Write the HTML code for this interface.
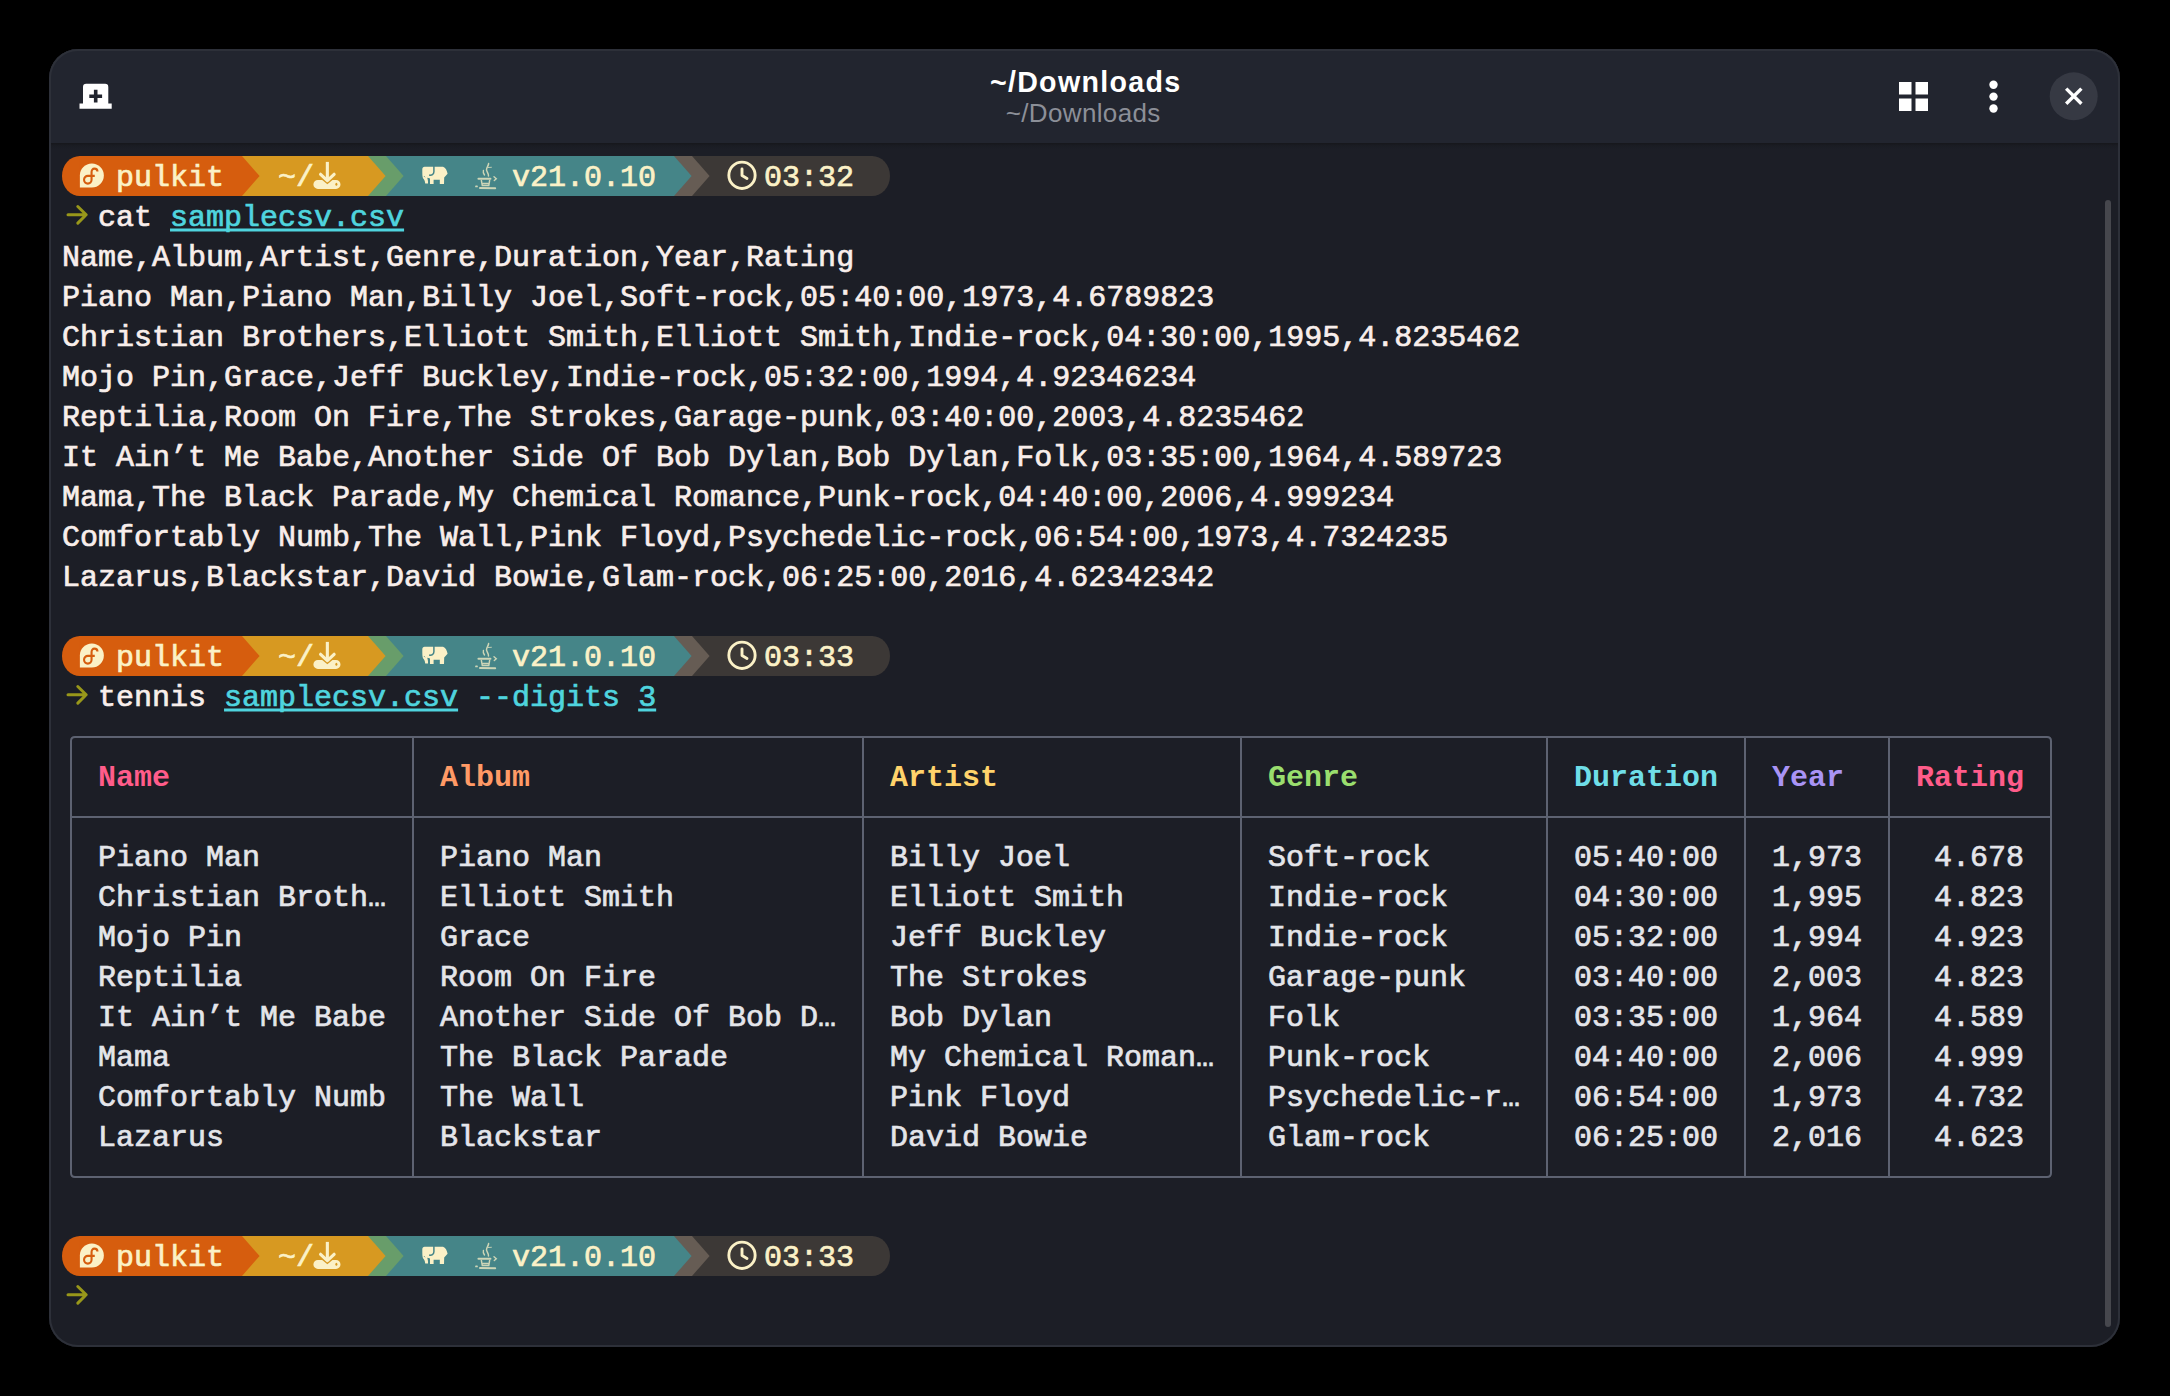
<!DOCTYPE html>
<html><head><meta charset="utf-8"><style>
html,body{margin:0;padding:0;background:#000;width:2170px;height:1396px;overflow:hidden}
#win{position:absolute;left:49px;top:49px;width:2071px;height:1298px;border-radius:29px;background:#1c1e26;overflow:hidden}
#winb{position:absolute;left:49px;top:49px;width:2071px;height:1298px;border-radius:29px;box-shadow:inset 0 0 0 2px #2d3039;pointer-events:none}
#hdr{position:absolute;left:0;top:0;width:2071px;height:94px;background:#22252f}
#shd{position:absolute;left:0;top:94px;width:2071px;height:6px;background:linear-gradient(#16171c,#1a1c23 45%,rgba(28,30,38,0))}
.ln{position:absolute;height:40px;line-height:40px;white-space:pre;font-family:"Liberation Mono",monospace;font-size:30px;letter-spacing:0px;transform:translateY(1.5px);-webkit-text-stroke:0.7px currentColor}
.pl{position:absolute;overflow:visible}
.ttl{position:absolute;left:0;width:2170px;text-align:center;font-family:"Liberation Sans",sans-serif;white-space:pre}
</style></head><body>
<div id="win"><div id="hdr"></div><div id="shd"></div></div>
<div id="winb"></div>
<svg class="pl" style="left:0;top:0" width="2170" height="150">
 <g fill="#fff">
  <path d="M83 87 Q83 83.8 86.2 83.8 L105.1 83.8 Q108.3 83.8 108.3 87 L108.3 103.6 L111.7 103.6 L111.7 108.7 L79.5 108.7 L79.5 103.6 L83 103.6 Z"/>
 </g>
 <path d="M95.7 89.8 L95.7 102.6 M89.3 96.2 L102.1 96.2" stroke="#22252f" stroke-width="3.6"/>
 <g fill="#fff">
  <rect x="1899" y="82" width="12.5" height="12.5"/><rect x="1915.5" y="82" width="12.5" height="12.5"/>
  <rect x="1899" y="98.5" width="12.5" height="12.5"/><rect x="1915.5" y="98.5" width="12.5" height="12.5"/>
  <circle cx="1993.5" cy="84.7" r="4.2"/><circle cx="1993.5" cy="96.6" r="4.2"/><circle cx="1993.5" cy="108.5" r="4.2"/>
 </g>
 <circle cx="2073.7" cy="96.3" r="24" fill="#363943"/>
 <path d="M2066.2 88.6 L2081.4 103.8 M2081.4 88.6 L2066.2 103.8" stroke="#fff" stroke-width="3.4"/>
</svg>
<div class="ttl" style="top:64px;font-size:28.6px;font-weight:bold;color:#fff;line-height:36px;letter-spacing:1.3px;text-indent:1.3px">~/Downloads</div>
<div class="ttl" style="top:98px;left:-2px;font-size:26px;color:#8c8f98;line-height:30px;letter-spacing:0.35px;text-indent:0.35px">~/Downloads</div>
<div style="position:absolute;left:2105px;top:200px;width:6px;height:1127px;border-radius:3px;background:#46474d"></div>
<svg class="pl" style="top:156px;left:62px" width="828" height="40"><path d="M18 0 A18 20 0 0 0 18 40 Z" fill="#d65d0e"/><rect x="17.5" y="0" width="163" height="40" fill="#d65d0e"/><rect x="180" y="0" width="126.5" height="40" fill="#d79921"/><rect x="180" y="0" width="18" height="40" fill="#d79921"/><path d="M180 0 L197.6 20 L180 40 Z" fill="#d65d0e"/><rect x="324" y="0" width="288.5" height="40" fill="#458588"/><rect x="306" y="0" width="18" height="40" fill="#689d6a"/><path d="M306 0 L323.6 20 L306 40 Z" fill="#d79921"/><rect x="324" y="0" width="18" height="40" fill="#458588"/><path d="M324 0 L341.6 20 L324 40 Z" fill="#689d6a"/><rect x="612" y="0" width="18" height="40" fill="#665c54"/><path d="M612 0 L629.6 20 L612 40 Z" fill="#458588"/><rect x="630" y="0" width="180.5" height="40" fill="#3c3836"/><rect x="630" y="0" width="18" height="40" fill="#3c3836"/><path d="M630 0 L647.6 20 L630 40 Z" fill="#665c54"/><path d="M810 0 A18 20 0 0 1 810 40 Z" fill="#3c3836"/><g transform="translate(29.85 19.5)"><path d="M0 -12 A12 12 0 1 1 0 12 L-12 12 L-12 0 A12 12 0 0 1 0 -12 Z" fill="#fbf1c7"/><path d="M5.6 -3.9 C5.6 -5.8 4.2 -6.9 2.6 -6.9 C0.8 -6.9 -0.3 -5.5 -0.3 -3.5 L-0.3 4.3 C-0.3 6.4 -2 8.1 -4 8.1 C-6.1 8.1 -7.8 6.4 -7.8 4.3 C-7.8 2.2 -6.1 0.4 -4 0.4 L2.9 0.4" fill="none" stroke="#d65d0e" stroke-width="2.1"/></g><g transform="translate(246 2)" fill="#fbf1c7"><rect x="17.8" y="3.9" width="3.1" height="17"/><path d="M12.6 16.3 L19.35 22.6 L26.1 16.3" fill="none" stroke="#fbf1c7" stroke-width="3.2" stroke-linecap="round" stroke-linejoin="round"/><path d="M9.9 21.9 L14.2 21.9 L19.35 26.3 L24.5 21.9 L28 21.9 A4.5 4.5 0 0 1 28 30.9 L9.9 30.9 A4.5 4.5 0 0 1 9.9 21.9 Z"/><ellipse cx="28.4" cy="26.3" rx="1" ry="1.5" fill="#d79921"/></g><g transform="translate(354 4)"><path fill="#fbf1c7" d="M8.6 6.8 L27 6.8 C29.5 7.6 31 10.5 31.6 13.8 L28.2 17.4 L28 24 L23.8 24 L23.8 19.8 L17.6 19.8 L17.6 24 L14 24 L14 18.6 C13 18.2 12 17.8 11.2 17.8 C11.8 19.6 12.2 21.2 12 23.6 L9.2 23.6 C9.2 21.2 8.2 19.6 7 18.2 C6.3 16.5 6.3 14 6.3 9.2 C6.3 7.7 7.2 6.8 8.6 6.8 Z"/><path fill="none" stroke="#458588" stroke-width="1.5" d="M17.9 5.8 L17.9 11.8 C17.9 14.3 15.6 15.7 13.2 15"/><path fill="none" stroke="#458588" stroke-width="1" d="M8.2 16.3 L9 17.2"/></g><g transform="translate(408 2)" fill="none" stroke="#fbf1c7" stroke-linecap="round" opacity="0.75"><path d="M13.4 12.5 C12.9 14 13.5 15.5 14.5 17" stroke-width="1.4"/><path d="M18.6 5.6 C18.5 8 16.2 9.5 16.5 12 C16.8 14 18.8 15.5 18.5 18" stroke-width="1.5"/><path d="M18.3 9.5 L21.4 9.3" stroke-width="0.9"/><path d="M8.4 20.7 L20.5 20.7" stroke-width="1.9"/><path d="M11.4 22.6 L12.3 27.4 L18.8 27.4 L19.6 22.6 M13.2 25.4 L17.8 25.4" stroke-width="1.5"/><path d="M24 18.8 L26.3 20.8 L24.3 22.6" stroke-width="1.4"/><path d="M6 28.4 L7 28.4" stroke-width="1.8"/><path d="M10 29.9 L25.2 30.2" stroke-width="2"/></g><g transform="translate(680 19)" fill="none" stroke="#fbf1c7" stroke-width="2.5"><circle cx="0" cy="0.3" r="13.15" stroke-width="2.9"/><path d="M0 -6 L0 0.5 L5 3.5" stroke-width="2.9" stroke-linecap="round" stroke-linejoin="round"/></g></svg><div class="ln" style="top:156px;left:116px"><span style="color:#fbf1c7">pulkit</span></div><div class="ln" style="top:156px;left:278px"><span style="color:#fbf1c7">~/</span></div><div class="ln" style="top:156px;left:512px"><span style="color:#fbf1c7">v21.0.10</span></div><div class="ln" style="top:156px;left:764px"><span style="color:#fbf1c7">03:32</span></div><svg class="pl" style="top:196px;left:62px" width="36" height="40"><path d="M6 18.8 L24 18.8 M15.8 10.5 L24.2 18.8 L15.8 27.1" fill="none" stroke="#98971a" stroke-width="3" stroke-linecap="round" stroke-linejoin="round"/></svg><div class="ln" style="top:196px;left:98px"><span style="color:#f8eeeb">cat </span><span style="color:#4fd4de;text-decoration:underline;text-underline-offset:3px;text-decoration-thickness:2.5px;text-decoration-skip-ink:none">samplecsv.csv</span></div><div class="ln" style="top:236px;left:62px"><span style="color:#f8eeeb">Name,Album,Artist,Genre,Duration,Year,Rating</span></div><div class="ln" style="top:276px;left:62px"><span style="color:#f8eeeb">Piano Man,Piano Man,Billy Joel,Soft-rock,05:40:00,1973,4.6789823</span></div><div class="ln" style="top:316px;left:62px"><span style="color:#f8eeeb">Christian Brothers,Elliott Smith,Elliott Smith,Indie-rock,04:30:00,1995,4.8235462</span></div><div class="ln" style="top:356px;left:62px"><span style="color:#f8eeeb">Mojo Pin,Grace,Jeff Buckley,Indie-rock,05:32:00,1994,4.92346234</span></div><div class="ln" style="top:396px;left:62px"><span style="color:#f8eeeb">Reptilia,Room On Fire,The Strokes,Garage-punk,03:40:00,2003,4.8235462</span></div><div class="ln" style="top:436px;left:62px"><span style="color:#f8eeeb">It Ain’t Me Babe,Another Side Of Bob Dylan,Bob Dylan,Folk,03:35:00,1964,4.589723</span></div><div class="ln" style="top:476px;left:62px"><span style="color:#f8eeeb">Mama,The Black Parade,My Chemical Romance,Punk-rock,04:40:00,2006,4.999234</span></div><div class="ln" style="top:516px;left:62px"><span style="color:#f8eeeb">Comfortably Numb,The Wall,Pink Floyd,Psychedelic-rock,06:54:00,1973,4.7324235</span></div><div class="ln" style="top:556px;left:62px"><span style="color:#f8eeeb">Lazarus,Blackstar,David Bowie,Glam-rock,06:25:00,2016,4.62342342</span></div><svg class="pl" style="top:636px;left:62px" width="828" height="40"><path d="M18 0 A18 20 0 0 0 18 40 Z" fill="#d65d0e"/><rect x="17.5" y="0" width="163" height="40" fill="#d65d0e"/><rect x="180" y="0" width="126.5" height="40" fill="#d79921"/><rect x="180" y="0" width="18" height="40" fill="#d79921"/><path d="M180 0 L197.6 20 L180 40 Z" fill="#d65d0e"/><rect x="324" y="0" width="288.5" height="40" fill="#458588"/><rect x="306" y="0" width="18" height="40" fill="#689d6a"/><path d="M306 0 L323.6 20 L306 40 Z" fill="#d79921"/><rect x="324" y="0" width="18" height="40" fill="#458588"/><path d="M324 0 L341.6 20 L324 40 Z" fill="#689d6a"/><rect x="612" y="0" width="18" height="40" fill="#665c54"/><path d="M612 0 L629.6 20 L612 40 Z" fill="#458588"/><rect x="630" y="0" width="180.5" height="40" fill="#3c3836"/><rect x="630" y="0" width="18" height="40" fill="#3c3836"/><path d="M630 0 L647.6 20 L630 40 Z" fill="#665c54"/><path d="M810 0 A18 20 0 0 1 810 40 Z" fill="#3c3836"/><g transform="translate(29.85 19.5)"><path d="M0 -12 A12 12 0 1 1 0 12 L-12 12 L-12 0 A12 12 0 0 1 0 -12 Z" fill="#fbf1c7"/><path d="M5.6 -3.9 C5.6 -5.8 4.2 -6.9 2.6 -6.9 C0.8 -6.9 -0.3 -5.5 -0.3 -3.5 L-0.3 4.3 C-0.3 6.4 -2 8.1 -4 8.1 C-6.1 8.1 -7.8 6.4 -7.8 4.3 C-7.8 2.2 -6.1 0.4 -4 0.4 L2.9 0.4" fill="none" stroke="#d65d0e" stroke-width="2.1"/></g><g transform="translate(246 2)" fill="#fbf1c7"><rect x="17.8" y="3.9" width="3.1" height="17"/><path d="M12.6 16.3 L19.35 22.6 L26.1 16.3" fill="none" stroke="#fbf1c7" stroke-width="3.2" stroke-linecap="round" stroke-linejoin="round"/><path d="M9.9 21.9 L14.2 21.9 L19.35 26.3 L24.5 21.9 L28 21.9 A4.5 4.5 0 0 1 28 30.9 L9.9 30.9 A4.5 4.5 0 0 1 9.9 21.9 Z"/><ellipse cx="28.4" cy="26.3" rx="1" ry="1.5" fill="#d79921"/></g><g transform="translate(354 4)"><path fill="#fbf1c7" d="M8.6 6.8 L27 6.8 C29.5 7.6 31 10.5 31.6 13.8 L28.2 17.4 L28 24 L23.8 24 L23.8 19.8 L17.6 19.8 L17.6 24 L14 24 L14 18.6 C13 18.2 12 17.8 11.2 17.8 C11.8 19.6 12.2 21.2 12 23.6 L9.2 23.6 C9.2 21.2 8.2 19.6 7 18.2 C6.3 16.5 6.3 14 6.3 9.2 C6.3 7.7 7.2 6.8 8.6 6.8 Z"/><path fill="none" stroke="#458588" stroke-width="1.5" d="M17.9 5.8 L17.9 11.8 C17.9 14.3 15.6 15.7 13.2 15"/><path fill="none" stroke="#458588" stroke-width="1" d="M8.2 16.3 L9 17.2"/></g><g transform="translate(408 2)" fill="none" stroke="#fbf1c7" stroke-linecap="round" opacity="0.75"><path d="M13.4 12.5 C12.9 14 13.5 15.5 14.5 17" stroke-width="1.4"/><path d="M18.6 5.6 C18.5 8 16.2 9.5 16.5 12 C16.8 14 18.8 15.5 18.5 18" stroke-width="1.5"/><path d="M18.3 9.5 L21.4 9.3" stroke-width="0.9"/><path d="M8.4 20.7 L20.5 20.7" stroke-width="1.9"/><path d="M11.4 22.6 L12.3 27.4 L18.8 27.4 L19.6 22.6 M13.2 25.4 L17.8 25.4" stroke-width="1.5"/><path d="M24 18.8 L26.3 20.8 L24.3 22.6" stroke-width="1.4"/><path d="M6 28.4 L7 28.4" stroke-width="1.8"/><path d="M10 29.9 L25.2 30.2" stroke-width="2"/></g><g transform="translate(680 19)" fill="none" stroke="#fbf1c7" stroke-width="2.5"><circle cx="0" cy="0.3" r="13.15" stroke-width="2.9"/><path d="M0 -6 L0 0.5 L5 3.5" stroke-width="2.9" stroke-linecap="round" stroke-linejoin="round"/></g></svg><div class="ln" style="top:636px;left:116px"><span style="color:#fbf1c7">pulkit</span></div><div class="ln" style="top:636px;left:278px"><span style="color:#fbf1c7">~/</span></div><div class="ln" style="top:636px;left:512px"><span style="color:#fbf1c7">v21.0.10</span></div><div class="ln" style="top:636px;left:764px"><span style="color:#fbf1c7">03:33</span></div><svg class="pl" style="top:676px;left:62px" width="36" height="40"><path d="M6 18.8 L24 18.8 M15.8 10.5 L24.2 18.8 L15.8 27.1" fill="none" stroke="#98971a" stroke-width="3" stroke-linecap="round" stroke-linejoin="round"/></svg><div class="ln" style="top:676px;left:98px"><span style="color:#f8eeeb">tennis </span><span style="color:#4fd4de;text-decoration:underline;text-underline-offset:3px;text-decoration-thickness:2.5px;text-decoration-skip-ink:none">samplecsv.csv</span><span style="color:#f8eeeb"> </span><span style="color:#4fd4de">--digits</span><span style="color:#f8eeeb"> </span><span style="color:#4fd4de;text-decoration:underline;text-underline-offset:3px;text-decoration-thickness:2.5px;text-decoration-skip-ink:none">3</span></div><svg class="pl" style="top:0;left:0" width="2170" height="1396"><path d="M71 741 Q71 737 75 737 L2047 737 Q2051 737 2051 741 L2051 1173 Q2051 1177 2047 1177 L75 1177 Q71 1177 71 1173 Z" stroke="#5d6271" stroke-width="2" fill="none"/><path d="M71 817 L2051 817" stroke="#5d6271" stroke-width="2" fill="none"/><path d="M413 737 L413 1177" stroke="#5d6271" stroke-width="2" fill="none"/><path d="M863 737 L863 1177" stroke="#5d6271" stroke-width="2" fill="none"/><path d="M1241 737 L1241 1177" stroke="#5d6271" stroke-width="2" fill="none"/><path d="M1547 737 L1547 1177" stroke="#5d6271" stroke-width="2" fill="none"/><path d="M1745 737 L1745 1177" stroke="#5d6271" stroke-width="2" fill="none"/><path d="M1889 737 L1889 1177" stroke="#5d6271" stroke-width="2" fill="none"/></svg><div class="ln" style="top:756px;left:98px"><span style="color:#ff5c8a;font-weight:bold;-webkit-text-stroke:0">Name</span></div><div class="ln" style="top:756px;left:440px"><span style="color:#ff9a66;font-weight:bold;-webkit-text-stroke:0">Album</span></div><div class="ln" style="top:756px;left:890px"><span style="color:#ffd36b;font-weight:bold;-webkit-text-stroke:0">Artist</span></div><div class="ln" style="top:756px;left:1268px"><span style="color:#9ade6e;font-weight:bold;-webkit-text-stroke:0">Genre</span></div><div class="ln" style="top:756px;left:1574px"><span style="color:#6fdee8;font-weight:bold;-webkit-text-stroke:0">Duration</span></div><div class="ln" style="top:756px;left:1772px"><span style="color:#a994f5;font-weight:bold;-webkit-text-stroke:0">Year</span></div><div class="ln" style="top:756px;left:1916px"><span style="color:#ff5c8a;font-weight:bold;-webkit-text-stroke:0">Rating</span></div><div class="ln" style="top:836px;left:98px"><span style="color:#e4e5ea">Piano Man</span></div><div class="ln" style="top:836px;left:440px"><span style="color:#e4e5ea">Piano Man</span></div><div class="ln" style="top:836px;left:890px"><span style="color:#e4e5ea">Billy Joel</span></div><div class="ln" style="top:836px;left:1268px"><span style="color:#e4e5ea">Soft-rock</span></div><div class="ln" style="top:836px;left:1574px"><span style="color:#e4e5ea">05:40:00</span></div><div class="ln" style="top:836px;left:1772px"><span style="color:#e4e5ea">1,973</span></div><div class="ln" style="top:836px;left:1934px"><span style="color:#e4e5ea">4.678</span></div><div class="ln" style="top:876px;left:98px"><span style="color:#e4e5ea">Christian Broth…</span></div><div class="ln" style="top:876px;left:440px"><span style="color:#e4e5ea">Elliott Smith</span></div><div class="ln" style="top:876px;left:890px"><span style="color:#e4e5ea">Elliott Smith</span></div><div class="ln" style="top:876px;left:1268px"><span style="color:#e4e5ea">Indie-rock</span></div><div class="ln" style="top:876px;left:1574px"><span style="color:#e4e5ea">04:30:00</span></div><div class="ln" style="top:876px;left:1772px"><span style="color:#e4e5ea">1,995</span></div><div class="ln" style="top:876px;left:1934px"><span style="color:#e4e5ea">4.823</span></div><div class="ln" style="top:916px;left:98px"><span style="color:#e4e5ea">Mojo Pin</span></div><div class="ln" style="top:916px;left:440px"><span style="color:#e4e5ea">Grace</span></div><div class="ln" style="top:916px;left:890px"><span style="color:#e4e5ea">Jeff Buckley</span></div><div class="ln" style="top:916px;left:1268px"><span style="color:#e4e5ea">Indie-rock</span></div><div class="ln" style="top:916px;left:1574px"><span style="color:#e4e5ea">05:32:00</span></div><div class="ln" style="top:916px;left:1772px"><span style="color:#e4e5ea">1,994</span></div><div class="ln" style="top:916px;left:1934px"><span style="color:#e4e5ea">4.923</span></div><div class="ln" style="top:956px;left:98px"><span style="color:#e4e5ea">Reptilia</span></div><div class="ln" style="top:956px;left:440px"><span style="color:#e4e5ea">Room On Fire</span></div><div class="ln" style="top:956px;left:890px"><span style="color:#e4e5ea">The Strokes</span></div><div class="ln" style="top:956px;left:1268px"><span style="color:#e4e5ea">Garage-punk</span></div><div class="ln" style="top:956px;left:1574px"><span style="color:#e4e5ea">03:40:00</span></div><div class="ln" style="top:956px;left:1772px"><span style="color:#e4e5ea">2,003</span></div><div class="ln" style="top:956px;left:1934px"><span style="color:#e4e5ea">4.823</span></div><div class="ln" style="top:996px;left:98px"><span style="color:#e4e5ea">It Ain’t Me Babe</span></div><div class="ln" style="top:996px;left:440px"><span style="color:#e4e5ea">Another Side Of Bob D…</span></div><div class="ln" style="top:996px;left:890px"><span style="color:#e4e5ea">Bob Dylan</span></div><div class="ln" style="top:996px;left:1268px"><span style="color:#e4e5ea">Folk</span></div><div class="ln" style="top:996px;left:1574px"><span style="color:#e4e5ea">03:35:00</span></div><div class="ln" style="top:996px;left:1772px"><span style="color:#e4e5ea">1,964</span></div><div class="ln" style="top:996px;left:1934px"><span style="color:#e4e5ea">4.589</span></div><div class="ln" style="top:1036px;left:98px"><span style="color:#e4e5ea">Mama</span></div><div class="ln" style="top:1036px;left:440px"><span style="color:#e4e5ea">The Black Parade</span></div><div class="ln" style="top:1036px;left:890px"><span style="color:#e4e5ea">My Chemical Roman…</span></div><div class="ln" style="top:1036px;left:1268px"><span style="color:#e4e5ea">Punk-rock</span></div><div class="ln" style="top:1036px;left:1574px"><span style="color:#e4e5ea">04:40:00</span></div><div class="ln" style="top:1036px;left:1772px"><span style="color:#e4e5ea">2,006</span></div><div class="ln" style="top:1036px;left:1934px"><span style="color:#e4e5ea">4.999</span></div><div class="ln" style="top:1076px;left:98px"><span style="color:#e4e5ea">Comfortably Numb</span></div><div class="ln" style="top:1076px;left:440px"><span style="color:#e4e5ea">The Wall</span></div><div class="ln" style="top:1076px;left:890px"><span style="color:#e4e5ea">Pink Floyd</span></div><div class="ln" style="top:1076px;left:1268px"><span style="color:#e4e5ea">Psychedelic-r…</span></div><div class="ln" style="top:1076px;left:1574px"><span style="color:#e4e5ea">06:54:00</span></div><div class="ln" style="top:1076px;left:1772px"><span style="color:#e4e5ea">1,973</span></div><div class="ln" style="top:1076px;left:1934px"><span style="color:#e4e5ea">4.732</span></div><div class="ln" style="top:1116px;left:98px"><span style="color:#e4e5ea">Lazarus</span></div><div class="ln" style="top:1116px;left:440px"><span style="color:#e4e5ea">Blackstar</span></div><div class="ln" style="top:1116px;left:890px"><span style="color:#e4e5ea">David Bowie</span></div><div class="ln" style="top:1116px;left:1268px"><span style="color:#e4e5ea">Glam-rock</span></div><div class="ln" style="top:1116px;left:1574px"><span style="color:#e4e5ea">06:25:00</span></div><div class="ln" style="top:1116px;left:1772px"><span style="color:#e4e5ea">2,016</span></div><div class="ln" style="top:1116px;left:1934px"><span style="color:#e4e5ea">4.623</span></div><svg class="pl" style="top:1236px;left:62px" width="828" height="40"><path d="M18 0 A18 20 0 0 0 18 40 Z" fill="#d65d0e"/><rect x="17.5" y="0" width="163" height="40" fill="#d65d0e"/><rect x="180" y="0" width="126.5" height="40" fill="#d79921"/><rect x="180" y="0" width="18" height="40" fill="#d79921"/><path d="M180 0 L197.6 20 L180 40 Z" fill="#d65d0e"/><rect x="324" y="0" width="288.5" height="40" fill="#458588"/><rect x="306" y="0" width="18" height="40" fill="#689d6a"/><path d="M306 0 L323.6 20 L306 40 Z" fill="#d79921"/><rect x="324" y="0" width="18" height="40" fill="#458588"/><path d="M324 0 L341.6 20 L324 40 Z" fill="#689d6a"/><rect x="612" y="0" width="18" height="40" fill="#665c54"/><path d="M612 0 L629.6 20 L612 40 Z" fill="#458588"/><rect x="630" y="0" width="180.5" height="40" fill="#3c3836"/><rect x="630" y="0" width="18" height="40" fill="#3c3836"/><path d="M630 0 L647.6 20 L630 40 Z" fill="#665c54"/><path d="M810 0 A18 20 0 0 1 810 40 Z" fill="#3c3836"/><g transform="translate(29.85 19.5)"><path d="M0 -12 A12 12 0 1 1 0 12 L-12 12 L-12 0 A12 12 0 0 1 0 -12 Z" fill="#fbf1c7"/><path d="M5.6 -3.9 C5.6 -5.8 4.2 -6.9 2.6 -6.9 C0.8 -6.9 -0.3 -5.5 -0.3 -3.5 L-0.3 4.3 C-0.3 6.4 -2 8.1 -4 8.1 C-6.1 8.1 -7.8 6.4 -7.8 4.3 C-7.8 2.2 -6.1 0.4 -4 0.4 L2.9 0.4" fill="none" stroke="#d65d0e" stroke-width="2.1"/></g><g transform="translate(246 2)" fill="#fbf1c7"><rect x="17.8" y="3.9" width="3.1" height="17"/><path d="M12.6 16.3 L19.35 22.6 L26.1 16.3" fill="none" stroke="#fbf1c7" stroke-width="3.2" stroke-linecap="round" stroke-linejoin="round"/><path d="M9.9 21.9 L14.2 21.9 L19.35 26.3 L24.5 21.9 L28 21.9 A4.5 4.5 0 0 1 28 30.9 L9.9 30.9 A4.5 4.5 0 0 1 9.9 21.9 Z"/><ellipse cx="28.4" cy="26.3" rx="1" ry="1.5" fill="#d79921"/></g><g transform="translate(354 4)"><path fill="#fbf1c7" d="M8.6 6.8 L27 6.8 C29.5 7.6 31 10.5 31.6 13.8 L28.2 17.4 L28 24 L23.8 24 L23.8 19.8 L17.6 19.8 L17.6 24 L14 24 L14 18.6 C13 18.2 12 17.8 11.2 17.8 C11.8 19.6 12.2 21.2 12 23.6 L9.2 23.6 C9.2 21.2 8.2 19.6 7 18.2 C6.3 16.5 6.3 14 6.3 9.2 C6.3 7.7 7.2 6.8 8.6 6.8 Z"/><path fill="none" stroke="#458588" stroke-width="1.5" d="M17.9 5.8 L17.9 11.8 C17.9 14.3 15.6 15.7 13.2 15"/><path fill="none" stroke="#458588" stroke-width="1" d="M8.2 16.3 L9 17.2"/></g><g transform="translate(408 2)" fill="none" stroke="#fbf1c7" stroke-linecap="round" opacity="0.75"><path d="M13.4 12.5 C12.9 14 13.5 15.5 14.5 17" stroke-width="1.4"/><path d="M18.6 5.6 C18.5 8 16.2 9.5 16.5 12 C16.8 14 18.8 15.5 18.5 18" stroke-width="1.5"/><path d="M18.3 9.5 L21.4 9.3" stroke-width="0.9"/><path d="M8.4 20.7 L20.5 20.7" stroke-width="1.9"/><path d="M11.4 22.6 L12.3 27.4 L18.8 27.4 L19.6 22.6 M13.2 25.4 L17.8 25.4" stroke-width="1.5"/><path d="M24 18.8 L26.3 20.8 L24.3 22.6" stroke-width="1.4"/><path d="M6 28.4 L7 28.4" stroke-width="1.8"/><path d="M10 29.9 L25.2 30.2" stroke-width="2"/></g><g transform="translate(680 19)" fill="none" stroke="#fbf1c7" stroke-width="2.5"><circle cx="0" cy="0.3" r="13.15" stroke-width="2.9"/><path d="M0 -6 L0 0.5 L5 3.5" stroke-width="2.9" stroke-linecap="round" stroke-linejoin="round"/></g></svg><div class="ln" style="top:1236px;left:116px"><span style="color:#fbf1c7">pulkit</span></div><div class="ln" style="top:1236px;left:278px"><span style="color:#fbf1c7">~/</span></div><div class="ln" style="top:1236px;left:512px"><span style="color:#fbf1c7">v21.0.10</span></div><div class="ln" style="top:1236px;left:764px"><span style="color:#fbf1c7">03:33</span></div><svg class="pl" style="top:1276px;left:62px" width="36" height="40"><path d="M6 18.8 L24 18.8 M15.8 10.5 L24.2 18.8 L15.8 27.1" fill="none" stroke="#98971a" stroke-width="3" stroke-linecap="round" stroke-linejoin="round"/></svg>
</body></html>
